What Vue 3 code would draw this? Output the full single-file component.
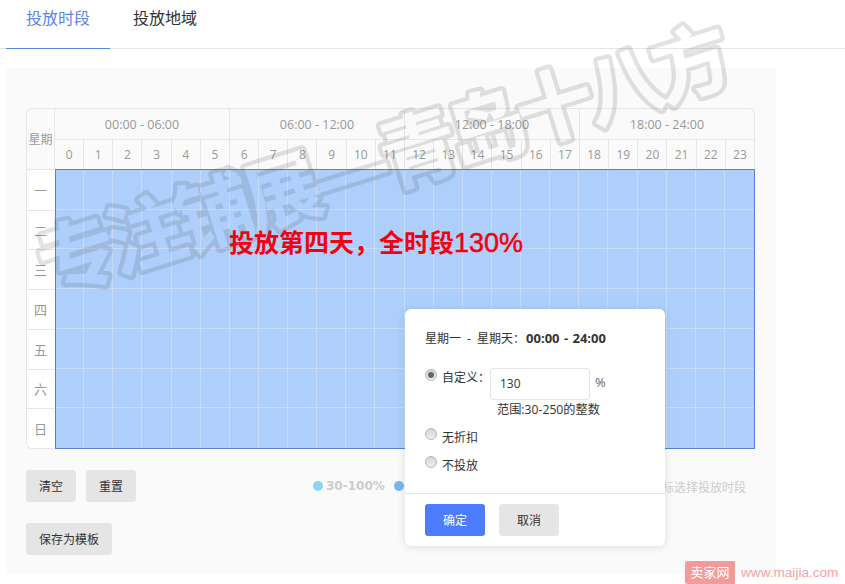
<template>
  <div class="page">
    <div class="tabs">
      <div class="tab active">投放时段</div>
      <div class="tab">投放地域</div>
    </div>

    <div class="panel">
      <div class="schedule">
        <div class="week-head">星期</div>
        <div class="range-row">
          <div v-for="r in ranges" :key="r" class="range">{{ r }}</div>
        </div>
        <div class="hour-row">
          <div v-for="h in hours" :key="h" class="hour">{{ h }}</div>
        </div>
        <div class="days">
          <div v-for="d in days" :key="d" class="day">{{ d }}</div>
        </div>
        <div class="cells">
          <div v-for="n in 168" :key="n" class="cell"></div>
        </div>
      </div>

      <div class="actions">
        <button class="btn">清空</button>
        <button class="btn">重置</button>
        <div class="legend">
          <i class="dot light"></i><b>30-100%</b>
          <i class="dot mid"></i><b>100-250%</b>
        </div>
        <span class="tip">拖动鼠标选择投放时段</span>
      </div>
      <button class="btn save">保存为模板</button>
    </div>

    <!-- 水印：空心描边字 -->
    <svg class="watermark" width="845" height="584">
      <mask id="wm-mask" maskUnits="userSpaceOnUse" x="0" y="0" width="845" height="584">
        <g transform="translate(49 295) rotate(-17.4)" class="wm-text">
          <text fill="#fff" stroke="#fff" stroke-width="9" stroke-linejoin="round">{{ mark }}</text>
          <text fill="#000" stroke="#000" stroke-width="0.5">{{ mark }}</text>
        </g>
      </mask>
      <rect width="845" height="584" fill="rgba(60, 60, 60, 0.15)" mask="url(#wm-mask)" />
    </svg>
    <div class="note">投放第四天，全时段<span class="note-num">130%</span></div>

    <!-- 弹窗 -->
    <div class="popup">
      <div class="popup-body">
        <div class="popup-title">星期一 - 星期天：<b>00:00 - 24:00</b></div>
        <div class="opt custom">
          <i class="radio checked"></i>
          <span class="opt-label">自定义：</span>
          <div class="input">130</div>
          <span class="pct">%</span>
        </div>
        <div class="hint">范围:30-250的整数</div>
        <div class="opt plain"><i class="radio"></i><span>无折扣</span></div>
        <div class="opt plain"><i class="radio"></i><span>不投放</span></div>
      </div>
      <div class="popup-foot">
        <button class="btn primary">确定</button>
        <button class="btn">取消</button>
      </div>
    </div>

    <div class="brand">
      <span class="brand-tag">卖家网</span>
      <span class="brand-url">www.maijia.com</span>
    </div>
  </div>
</template>

<script setup>
const ranges = ['00:00 - 06:00', '06:00 - 12:00', '12:00 - 18:00', '18:00 - 24:00']
const hours = Array.from({ length: 24 }, (_, i) => i)
const days = ['一', '二', '三', '四', '五', '六', '日']
const mark = '专注铺展—青岛十八方'
</script>

<style>
html, body {
  margin: 0;
  overflow: hidden;
  background: #fff;
}
</style>

<style scoped>
.page {
  position: relative;
  width: 845px;
  height: 584px;
  overflow: hidden;
  font-family: "Open Sans", "Noto Sans CJK SC", sans-serif;
  font-size: 12px;
  color: #333;
}

/* 顶部标签 */
.tabs {
  display: flex;
  height: 48px;
  padding-left: 6px;
  border-bottom: 1px solid #e6e6e6;
}
.tab {
  width: 104px;
  margin-right: 3px;
  height: 49px;
  line-height: 37px;
  font-size: 16px;
  text-align: center;
  box-sizing: border-box;
}
.tab.active {
  color: #5b86e5;
  border-bottom: 1px solid #5b86e5;
}

/* 灰色面板 */
.panel {
  margin: 19px 0 0 6px;
  width: 770px;
  height: 506px;
  box-sizing: border-box;
  padding: 40px 20px 0;
  background: #fafafa;
}

.schedule {
  display: grid;
  grid-template-columns: 28px 701px;
  grid-template-rows: 31px 30px 280px;
  width: 729px;
  color: #999;
}
.week-head {
  grid-row: 1 / 3;
  display: flex;
  align-items: center;
  justify-content: center;
  border: 1px solid #e6e6e6;
  border-right: none;
  border-bottom: none;
  border-top-left-radius: 6px;
  box-sizing: border-box;
}
.range-row {
  display: flex;
  border-top: 1px solid #e6e6e6;
  border-right: 1px solid #e6e6e6;
  border-top-right-radius: 6px;
}
.range {
  flex: 1;
  text-align: center;
  line-height: 31px;
  border-left: 1px solid #e6e6e6;
  font-size: 12.5px;
}
.hour-row {
  display: grid;
  grid-template-columns: repeat(24, 1fr);
  border-top: 1px solid #e6e6e6;
  border-right: 1px solid #e6e6e6;
}
.hour {
  text-align: center;
  line-height: 29px;
  border-left: 1px solid #e6e6e6;
}
.days {
  display: grid;
  grid-template-rows: repeat(7, 1fr);
  border: 1px solid #e6e6e6;
  border-right: none;
  border-bottom-left-radius: 6px;
  background: #fff;
}
.day {
  display: flex;
  align-items: center;
  justify-content: center;
  font-size: 13px;
  border-top: 1px solid #e6e6e6;
}
.day:first-child {
  border-top: none;
}
.cells {
  display: grid;
  grid-template-columns: 28.2px repeat(23, 1fr);
  grid-template-rows: repeat(7, 1fr);
  margin-left: 1px;
  border: 1px solid #5b80d0;
  background: #aecffb;
  box-sizing: border-box;
}
.cell {
  border-right: 1px solid #c6dbf7;
  border-bottom: 1px solid #c6dbf7;
}
.cell:nth-child(24n) {
  border-right: none;
}
.cell:nth-last-child(-n + 24) {
  border-bottom: none;
}

/* 按钮 */
.btn {
  width: 50px;
  height: 32px;
  padding: 0;
  border: none;
  border-radius: 3px;
  background: #e5e5e5;
  color: #333;
  font: inherit;
}
.actions {
  position: relative;
  display: flex;
  gap: 10px;
  margin-top: 21px;
}
.legend {
  position: absolute;
  left: 287px;
  top: 9px;
  display: flex;
  align-items: center;
  font-family: "DejaVu Sans", sans-serif;
  font-size: 12px;
  color: #ccc;
}
.legend b {
  width: 60px;
  margin: 0 8px 0 3px;
  white-space: nowrap;
}
.dot {
  width: 10px;
  height: 10px;
  border-radius: 50%;
}
.dot.light {
  background: #8ad4f5;
}
.dot.mid {
  background: #78b6f8;
}
.tip {
  position: absolute;
  right: 10px;
  top: 8px;
  color: #ccc;
}
.save {
  display: block;
  width: 86px;
  margin-top: 21px;
}

/* 水印和标注 */
.watermark {
  position: absolute;
  left: 0;
  top: 0;
  pointer-events: none;
}
.wm-text {
  font-size: 78px;
  font-weight: 700;
  letter-spacing: -6.5px;
}
.note {
  position: absolute;
  left: 229px;
  top: 226px;
  font-family: "Liberation Sans", "Noto Sans CJK SC", sans-serif;
  font-size: 25px;
  line-height: 34px;
  font-weight: 700;
  color: #f5000d;
}
.note-num {
  font-size: 27px;
  font-weight: 400;
  -webkit-text-stroke: 0.5px #f5000d;
}

/* 弹窗 */
.popup {
  position: absolute;
  left: 405px;
  top: 309px;
  width: 260px;
  height: 237px;
  background: #fff;
  border-radius: 6px;
  box-shadow: 0 1px 8px rgba(0, 0, 0, 0.12);
}
.popup-body {
  height: 185px;
  box-sizing: border-box;
  padding: 20px 20px 0;
  border-bottom: 1px solid #e6e6e6;
}
.popup-title {
  line-height: 18px;
  word-spacing: 3px;
}
.popup-title b {
  margin-left: 1px;
  font-size: 13px;
  word-spacing: 1px;
}
.opt {
  display: flex;
}
.custom {
  margin-top: 20px;
  height: 32px;
}
.opt-label {
  width: 48px;
  margin: 0 0 0 5px;
  line-height: 20px;
  white-space: nowrap;
}
.input {
  width: 100px;
  height: 32px;
  box-sizing: border-box;
  padding-left: 9px;
  line-height: 29px;
  border: 1px solid #e6e6e6;
  border-radius: 3px;
}
.pct {
  margin: 5px 0 0 5px;
  line-height: 18px;
  font-size: 13px;
  color: #666;
}
.hint {
  margin: 1px 0 0 72px;
  line-height: 18px;
  font-size: 12.2px;
}
.plain {
  align-items: center;
  gap: 5px;
  height: 18px;
  margin-top: 9px;
}
.plain + .plain {
  margin-top: 10px;
}
.plain .radio {
  margin-top: -6px;
}
.radio {
  flex: none;
  position: relative;
  box-sizing: border-box;
  width: 12px;
  height: 12px;
  margin-top: 1px;
  border: 1px solid #b5b5b5;
  border-radius: 50%;
  background: linear-gradient(#d5d5d5, #efefef);
}
.radio.checked::after {
  content: "";
  position: absolute;
  left: 2px;
  top: 2px;
  width: 6px;
  height: 6px;
  border-radius: 50%;
  background: #666;
}
.popup-foot {
  display: flex;
  gap: 14px;
  padding: 10px 20px;
}
.popup-foot .btn {
  width: 60px;
}
.btn.primary {
  background: #4d7cfe;
  color: #fff;
}

/* 角标 */
.brand {
  position: absolute;
  left: 685px;
  top: 561px;
  display: flex;
  align-items: center;
  height: 23px;
}
.brand-tag {
  width: 50px;
  line-height: 23px;
  text-align: center;
  color: #fff;
  font-size: 13px;
  background: #f39a9a;
  border-radius: 3px 0 0 3px;
}
.brand-url {
  margin-left: 6px;
  font-family: "Liberation Sans", sans-serif;
  font-size: 13.6px;
  color: #f5a3a8;
  white-space: nowrap;
}
</style>
